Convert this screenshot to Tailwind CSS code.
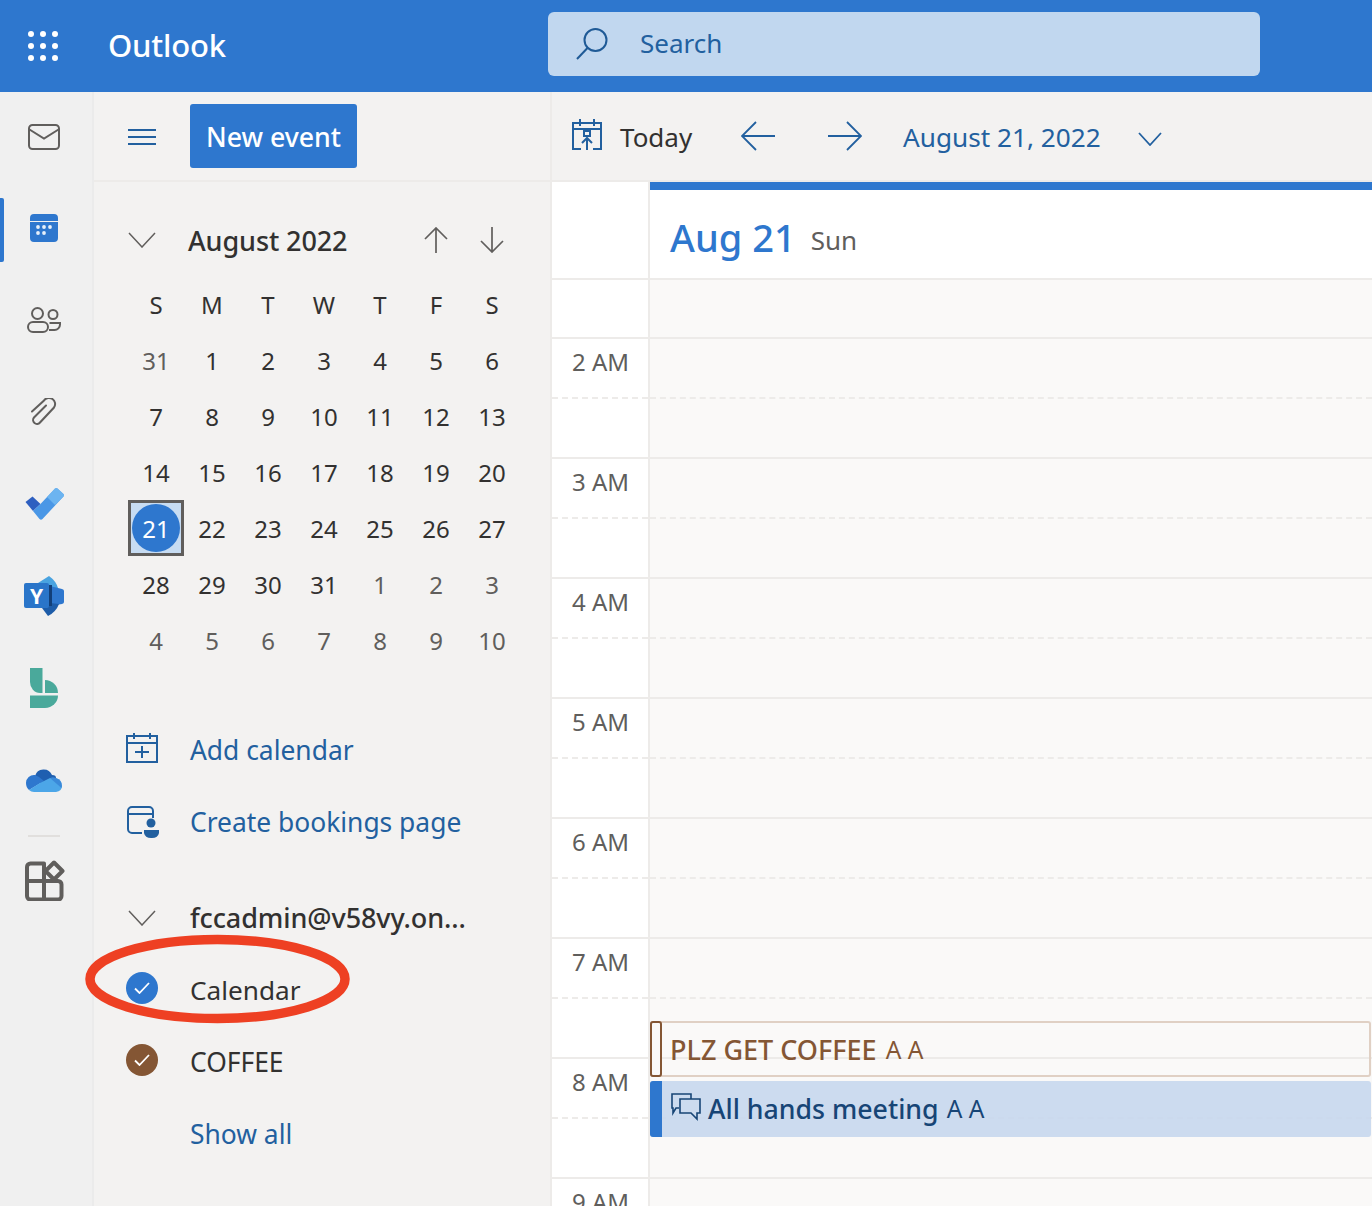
<!DOCTYPE html>
<html lang="en">

<head>
  <meta charset="UTF-8">
  <meta name="viewport" content="width=device-width, initial-scale=1.0">
  <title>Outlook Calendar</title>
  <script src="https://cdn.jsdelivr.net/npm/@tailwindcss/browser@4"></script>
</head>

<body class="bg-white font-['Noto_Sans',sans-serif] text-[#323130] overflow-hidden">
  <div class="relative w-[1372px] h-[1206px] overflow-hidden">
    <!-- Header -->
    <header class="h-[92px] bg-[#2e77ce] flex items-center">
      <div class="w-[108px] pl-[28px]">
        <svg width="30" height="30" viewBox="0 0 30 30" fill="#fff">
          <circle cx="3" cy="3" r="3" /><circle cx="15" cy="3" r="3" /><circle cx="27" cy="3" r="3" />
          <circle cx="3" cy="15" r="3" /><circle cx="15" cy="15" r="3" /><circle cx="27" cy="15" r="3" />
          <circle cx="3" cy="27" r="3" /><circle cx="15" cy="27" r="3" /><circle cx="27" cy="27" r="3" />
        </svg>
      </div>
      <div class="w-[440px] mb-[2px] text-white text-[31px] font-medium tracking-[-0.2px]">Outlook</div>
      <div class="w-[712px] h-[64px] mb-[4px] bg-[#c1d7ef] rounded-[6px] flex items-center pl-[27px] gap-[31px]">
        <svg width="34" height="34" viewBox="0 0 34 34" fill="none" stroke="#1f5a96" stroke-width="2">
          <circle cx="20.500" cy="13" r="11" />
          <path d="M12.500 21 2 32" />
        </svg>
        <span class="mb-[2px] text-[26px] text-[#22609f]">Search</span>
      </div>
    </header>

    <div class="flex h-[1114px]">
      <!-- App rail -->
      <nav class="w-[94px] shrink-0 bg-[#f0f0f0] border-r-2 border-[#ebebeb] relative pr-[4px] flex flex-col items-center">
        <div class="absolute left-0 top-[106px] w-[4px] h-[64px] bg-[#2e77ce] rounded-r-[2px]"></div>
        <div class="h-[92px] flex items-center">
          <svg class="mb-[2px]" width="32" height="26" viewBox="0 0 32 26" fill="none" stroke="#605e5c" stroke-width="2">
            <rect x="1" y="1" width="30" height="24" rx="3.500" />
            <path d="M1.500 5.500 16 14.500 30.500 5.500" />
          </svg>
        </div>
        <div class="h-[92px] flex items-center">
          <svg class="mb-[4px]" width="28" height="28" viewBox="0 0 28 28">
            <path fill="#2e77ce" d="M0 4a4 4 0 0 1 4-4h20a4 4 0 0 1 4 4v3H0zM0 8h28v16a4 4 0 0 1-4 4H4a4 4 0 0 1-4-4z" />
            <g fill="#e7f0fa">
              <circle cx="8" cy="13" r="1.900" /><circle cx="14" cy="13" r="1.900" /><circle cx="20" cy="13" r="1.900" />
              <circle cx="8" cy="19" r="1.900" /><circle cx="14" cy="19" r="1.900" />
            </g>
          </svg>
        </div>
        <div class="h-[92px] flex items-center">
          <svg class="mb-[4px]" width="34" height="26" viewBox="0 0 34 26" fill="none" stroke="#605e5c" stroke-width="2">
            <circle cx="10.500" cy="6.500" r="5.500" />
            <rect x="1" y="15" width="20" height="10" rx="5" />
            <circle cx="26" cy="7.500" r="4.500" />
            <path d="M22.500 16H33v1.500a5.500 5.500 0 0 1-5.500 5.500H22" />
          </svg>
        </div>
        <div class="h-[92px] flex items-center">
          <svg class="mb-[4px]" width="26" height="28" viewBox="0 0 26 28" fill="none" stroke="#605e5c" stroke-width="2" stroke-linecap="round">
            <path d="M1 13.500 13 2.500a5.500 5.500 0 0 1 10 7L9 24.500a3.700 3.700 0 0 1-6-5L15 7.500" />
          </svg>
        </div>
        <div class="h-[92px] flex items-center">
          <svg class="mb-[4px]" width="39" height="32" viewBox="0 0 39 32">
            <path fill="#2e5fc0" d="M.5 14 7.500 8.500 15.500 16 8 23z" />
            <path fill="#4a97e6" d="M8 23 15.500 16 30 .5q1.500-1 2.500 0l6 5.500q1 1 0 2.500L17.500 31q-1.500 1.500-3 0z" />
            <path fill="#74bcf2" d="M30 .5q1.500-1 2.500 0l6 5.500q1 1 0 2.500L30 17l-8-8z" opacity=".8" />
          </svg>
        </div>
        <div class="h-[92px] flex items-center">
          <svg class="mb-[4px]" width="40" height="40" viewBox="0 0 40 40">
            <path fill="#49a3e0" d="M14 7 25 0q7 5 9 12l-8 2z" />
            <path fill="#2e77ce" d="M26 10l12 3q2 .5 2 2v11q0 1.500-2 2l-12 2z" />
            <path fill="#1d5ca8" d="M18 32l6 8q8-4 11-12l-9-1z" />
            <rect x="25" y="9" width="3" height="21" fill="#123f78" />
            <rect x="0" y="7" width="25" height="25" rx="2" fill="#2a75c9" />
            <text x="12.500" y="27.500" text-anchor="middle" fill="#fff" font-size="21" font-weight="700" font-family="Noto Sans">Y</text>
          </svg>
        </div>
        <div class="h-[92px] flex items-center">
          <svg class="mb-[4px]" width="28" height="40" viewBox="0 0 28 40" fill="#4aa99b">
            <path d="M0 0h12.500v25H10A10 11 0 0 1 0 14z" />
            <path d="M15 12a13 13 0 0 1 13 13H15z" />
            <path d="M0 27.500h28A13 12.500 0 0 1 15 40H0z" />
          </svg>
        </div>
        <div class="h-[92px] flex items-center">
          <svg class="mb-[4px]" width="36" height="24" viewBox="0 0 36 24">
            <path fill="#1f5fb0" d="M9 8A9 9 0 0 1 26 7c3 0 4 1 4 3L16 17z" />
            <path fill="#2e77ce" d="M9 7a8 8 0 0 0-9 8c0 3 1 5 3 7l15-9-5-4z" />
            <path fill="#4ca6e8" d="M3 22q2 2 5 2h22q6-1 6-6 0-6-6-8-3-1-6 0L14 15z" />
            <path fill="#2e77ce" d="M30 10q6 2 6 8l-.5 2L24 10q3-1 6 0z" opacity=".6" />
          </svg>
        </div>
        <div class="w-[32px] h-[2px] bg-[#e1dfdd] mt-[7px]"></div>
        <svg class="mt-[23px] ml-[2px]" width="40" height="41" viewBox="0 0 40 41" fill="none" stroke="#605e5c" stroke-width="4" stroke-linejoin="round">
          <path d="M2 21V7a3.500 3.500 0 0 1 3.500-3.500H19V21zM19 21h14a3.500 3.500 0 0 1 3.500 3.500V36a3.500 3.500 0 0 1-3.500 3.500H19zM2 21h17v18.500H5.500A3.500 3.500 0 0 1 2 36z" />
          <path fill="#f0f0f0" d="M29 2.500 37.500 11 29 19.500 20.500 11z" />
        </svg>
      </nav>

      <!-- Sidebar -->
      <aside class="w-[458px] shrink-0 bg-[#f3f2f1] border-r-2 border-[#edebe9]">
        <div class="h-[90px] border-b-2 border-[#edebe9] flex items-center pl-[34px]">
          <svg class="mt-[1px]" width="28" height="16" viewBox="0 0 28 16" stroke="#22609f" stroke-width="2">
            <path d="M0 1h28M0 8h28M0 15h28" />
          </svg>
          <button class="ml-[34px] pt-[3px] w-[167px] h-[64px] bg-[#2e77ce] rounded-[3px] text-white text-[26.700px] font-medium">New event</button>
        </div>

        <div class="px-[34px]">
          <div class="h-[94px] pt-[24px] flex items-center">
            <svg class="mb-[2px]" width="28" height="16" viewBox="0 0 28 16" fill="none" stroke="#605e5c" stroke-width="1.500"><path d="M1 1 14 15 27 1" /></svg>
            <span class="ml-[32px] text-[27px] font-medium w-[236px] tracking-[-0.1px]">August 2022</span>
            <svg class="mb-[2px]" width="24" height="26" viewBox="0 0 24 26" fill="none" stroke="#605e5c" stroke-width="1.700"><path d="M12 26V1M1 12 12 1l11 11" /></svg>
            <svg class="ml-[32px] mb-[2px]" width="24" height="26" viewBox="0 0 24 26" fill="none" stroke="#605e5c" stroke-width="1.700"><path d="M12 0v25M1 14l11 11 11-11" /></svg>
          </div>
          <div id="mini" class="grid grid-cols-[repeat(7,56px)] auto-rows-[56px] text-[24px] text-center"></div>
        </div>

        <div class="mt-[52px] pl-[32px] h-[60px] flex items-center">
          <svg class="mb-[4px]" width="32" height="30" viewBox="0 0 32 30" fill="none" stroke="#22609f" stroke-width="2">
            <path d="M1 3h30v26H1zM1 10h30M8 0v6M24 0v6M16 13v12M9 19h14" />
          </svg>
          <span class="ml-[32px] mt-[2px] text-[26.400px] text-[#22609f]">Add calendar</span>
        </div>
        <div class="mt-[12px] pl-[33px] h-[60px] flex items-center">
          <svg width="32" height="32" viewBox="0 0 32 32" fill="none" stroke="#22609f" stroke-width="2">
            <path d="M15 27H5a4 4 0 0 1-4-4V5a4 4 0 0 1 4-4h17a4 4 0 0 1 4 4v7M1 8h25" />
            <circle cx="24" cy="17" r="4.500" fill="#22609f" stroke="none" />
            <path d="M17 24h15v3q-1 5-7 5h-1q-6 0-7-5z" fill="#22609f" stroke="none" />
          </svg>
          <span class="ml-[31px] mt-[2px] text-[26.400px] text-[#22609f]">Create bookings page</span>
        </div>

        <div class="mt-[36px] pl-[34px] h-[60px] flex items-center">
          <svg width="28" height="16" viewBox="0 0 28 16" fill="none" stroke="#605e5c" stroke-width="1.500"><path d="M1 1 14 15 27 1" /></svg>
          <span class="ml-[34px] text-[27px] font-medium tracking-[-0.1px]">fccadmin@v58vy.on...</span>
        </div>
        <div class="mt-[12px] pl-[32px] h-[60px] flex items-center">
          <span class="mb-[4px] w-[32px] h-[32px] rounded-full bg-[#2e77ce] flex items-center justify-center">
            <svg width="16" height="12" viewBox="0 0 16 12" fill="none" stroke="#fff" stroke-width="1.800"><path d="M1 6.500 5.500 11 15 1" /></svg>
          </span>
          <span class="ml-[32px] text-[26.200px] mt-[1px]">Calendar</span>
        </div>
        <div class="mt-[12px] pl-[32px] h-[60px] flex items-center">
          <span class="mb-[5px] w-[32px] h-[32px] rounded-full bg-[#845634] flex items-center justify-center">
            <svg width="16" height="12" viewBox="0 0 16 12" fill="none" stroke="#fff" stroke-width="1.800"><path d="M1 6.500 5.500 11 15 1" /></svg>
          </span>
          <span class="ml-[32px] text-[26.400px] mt-[1px]">COFFEE</span>
        </div>
        <div class="mt-[12px] pl-[96px] h-[60px] flex items-center">
          <span class="mt-[2px] text-[26.400px] text-[#22609f]">Show all</span>
        </div>
      </aside>

      <!-- Calendar -->
      <main class="flex-1 min-w-0 relative">
        <div class="h-[90px] bg-[#f3f2f1] border-b-2 border-[#edebe9] flex items-center pl-[20px]">
          <svg class="mb-[2px]" width="30" height="32" viewBox="0 0 30 32" fill="none" stroke="#22609f" stroke-width="2">
            <path d="M9 30H1V4h28v26h-8M1 10h28M8 0v7M22 0v7M15 31V19M10 24l5-5 5 5" />
            <rect x="12" y="12" width="6" height="5" stroke-width="2" />
          </svg>
          <span class="ml-[18px] mt-[2px] text-[26px] w-[74px]">Today</span>
          <svg class="ml-[47px]" width="34" height="30" viewBox="0 0 34 30" fill="none" stroke="#22609f" stroke-width="1.800"><path d="M34 15H2M15 1 1 15l14 14" /></svg>
          <svg class="ml-[53px]" width="34" height="30" viewBox="0 0 34 30" fill="none" stroke="#22609f" stroke-width="1.800"><path d="M0 15h32M19 1l14 14-14 14" /></svg>
          <span class="ml-[41px] mt-[4px] text-[26.200px] text-[#22609f] w-[199px] whitespace-nowrap">August 21, 2022</span>
          <svg class="ml-[36px] mt-[5px]" width="24" height="14" viewBox="0 0 24 14" fill="none" stroke="#22609f" stroke-width="1.800"><path d="M1 1l11 12L23 1" /></svg>
        </div>

        <div class="flex h-[98px] border-b-2 border-[#edebe9]">
          <div class="w-[98px] border-r-2 border-[#edebe9] shrink-0"></div>
          <div class="flex-1 border-t-8 border-[#2e77ce] flex items-center pl-[20px] pt-[4px] h-[98px]">
            <span class="text-[38px] font-medium text-[#2e77ce]">Aug 21</span>
            <span class="ml-[15px] mt-[6px] text-[26px] text-[#605e5c]">Sun</span>
          </div>
        </div>

        <div id="hours" class="h-[926px] overflow-hidden"></div>

        <!-- Events -->
        <div class="absolute left-[98px] right-[1px] top-[929px] h-[56px] border-2 border-l-0 border-[#e0d0c4] rounded-[3px] flex items-center pl-[20px]">
          <div class="absolute left-0 -top-[2px] w-[12px] h-[56px] border-2 border-[#845634] rounded-[3px] bg-[#faf9f8]"></div>
          <span class="mt-[3px] text-[27px] font-medium text-[#845634]">PLZ GET COFFEE</span>
          <span class="mt-[3px] ml-[9px] text-[24.500px] text-[#845634]">A A</span>
        </div>
        <div class="absolute left-[98px] right-[1px] top-[989px] h-[56px] bg-[#c7d7ed]/90 rounded-[3px] flex items-center overflow-hidden">
          <div class="w-[12px] h-full bg-[#2e77ce]"></div>
          <svg class="ml-[9px] mb-[5px]" width="30" height="28" viewBox="0 0 30 28" fill="none" stroke="#174576" stroke-width="1.600">
            <path d="M8 15H5l-3 5v-5H1V1h19v5" />
            <path d="M9 6h20v14h-3v6l-6-6H9z" />
          </svg>
          <span class="ml-[7px] text-[26.700px] font-medium text-[#174576]">All hands meeting</span>
          <span class="ml-[8px] text-[24.500px] text-[#174576]">A A</span>
        </div>
      </main>
    </div>

    <!-- Red annotation -->
    <svg class="absolute left-[80px] top-[930px] pointer-events-none" width="276" height="100" viewBox="0 0 276 100" fill="none">
      <ellipse cx="137.500" cy="49" rx="127.500" ry="39.500" stroke="#ee4023" stroke-width="9.500" />
    </svg>
  </div>

  <script>
    // mini month, [label, muted]
    const days = [[31, true]];
    for (let d = 1; d <= 31; d++) days.push([d, false]);
    for (let d = 1; d <= 10; d++) days.push([d, true]);

    document.getElementById('mini').innerHTML =
      ['S', 'M', 'T', 'W', 'T', 'F', 'S'].map(d => `<div class="flex items-center justify-center pt-[2px]">${d}</div>`).join('') +
      days.map(([d, muted]) => {
        if (d === 21 && !muted) {
          return `<div class="flex items-center justify-center bg-[#c7dcf2] border-[3px] border-[#605e5c]"><span class="w-[48px] h-[48px] shrink-0 pt-[2px] rounded-full bg-[#2e77ce] text-white flex items-center justify-center">21</span></div>`;
        }
        return `<div class="flex items-center justify-center pt-[2px] ${muted ? 'text-[#605e5c]' : ''}">${d}</div>`;
      }).join('');

    // time grid
    const rows = ['', '2 AM', '3 AM', '4 AM', '5 AM', '6 AM', '7 AM', '8 AM', '9 AM'];
    document.getElementById('hours').innerHTML = rows.map((label, i) => {
      if (i === 0) {
        return `<div class="flex h-[57px]"><div class="w-[98px] border-r-2 border-[#edebe9]"></div><div class="flex-1 bg-[#faf9f8]"></div></div>`;
      }
      return `<div class="flex h-[120px] border-t-2 border-[#edebe9]">
        <div class="w-[98px] shrink-0 border-r-2 border-[#edebe9]">
          <div class="h-[58px] pl-[20px] pt-[5px] text-[24px] text-[#605e5c]">${label}</div>
          <div class="border-t-2 border-dashed border-[#edebe9]"></div>
        </div>
        <div class="flex-1 bg-[#faf9f8]">
          <div class="h-[58px]"></div>
          <div class="border-t-2 border-dashed border-[#edebe9]"></div>
        </div>
      </div>`;
    }).join('');
  </script>
</body>

</html>
